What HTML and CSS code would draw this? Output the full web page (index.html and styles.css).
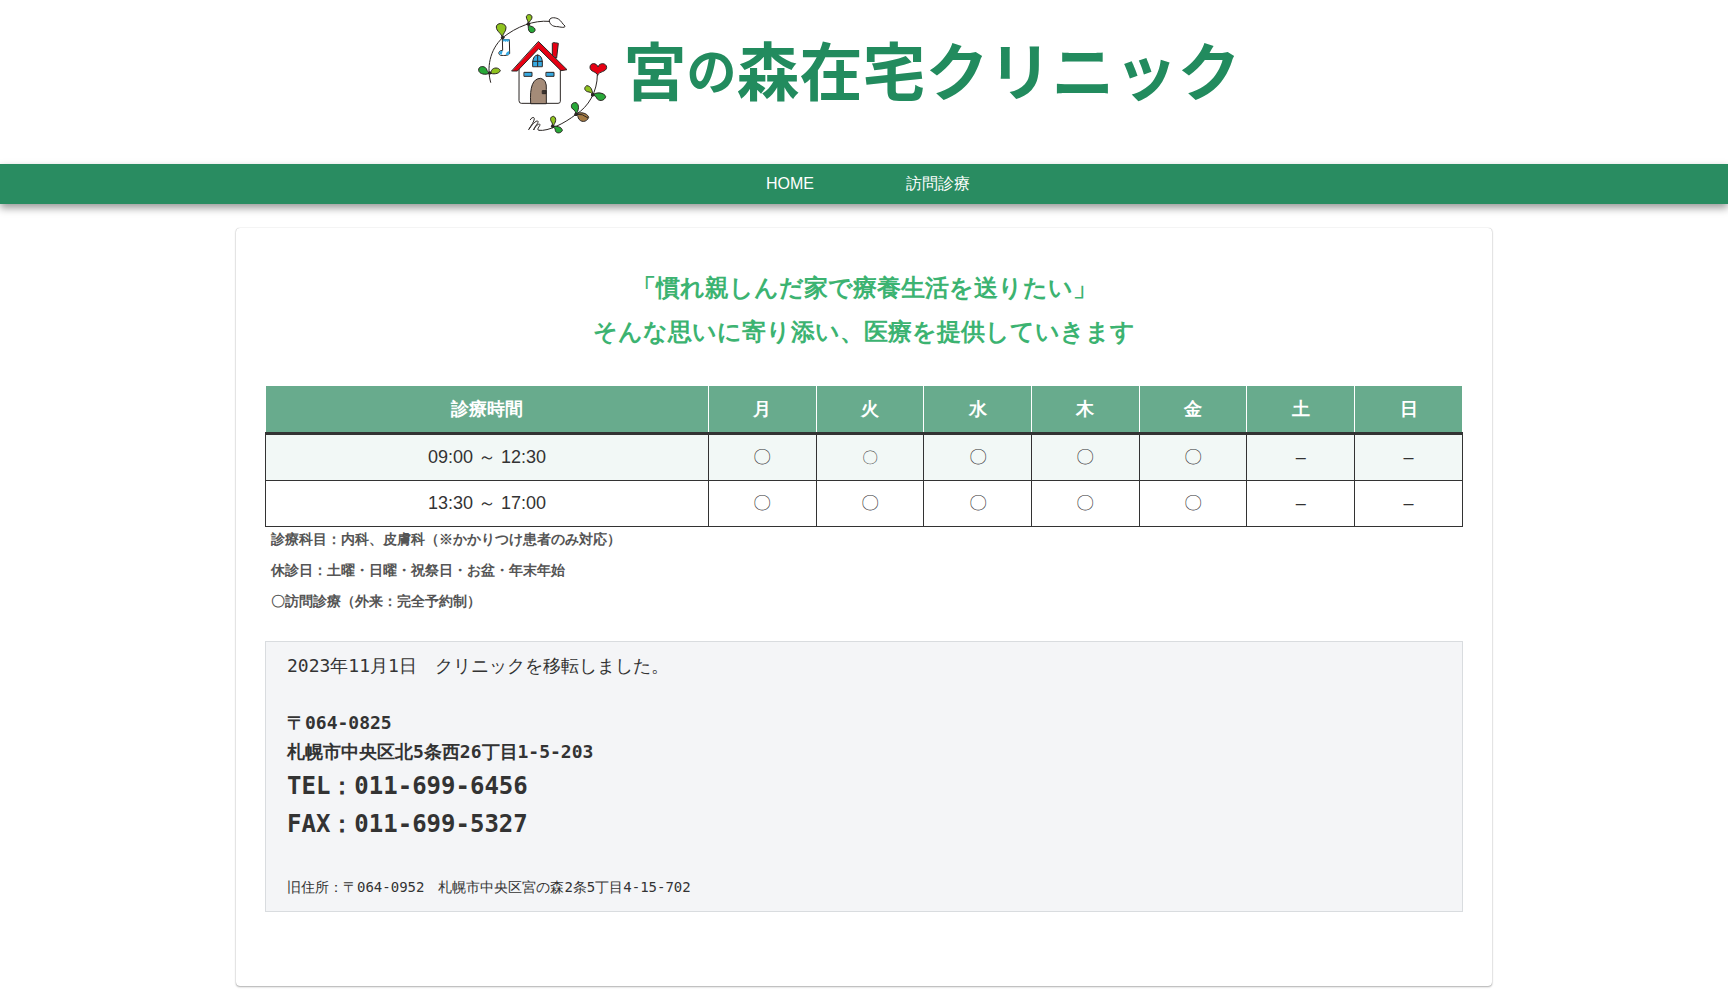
FILE: index.html
```html
<!DOCTYPE html>
<html lang="ja">
<head>
<meta charset="utf-8">
<meta name="viewport" content="width=device-width, initial-scale=1">
<title>宮の森在宅クリニック</title>
<link rel="stylesheet" href="styles.css">
</head>
<body>
<header class="site-header">
  <a class="logo" href="#">
    <svg class="logo-mark" viewBox="0 0 450 420" aria-hidden="true">
      <g fill="none" stroke="#2b2624" stroke-width="3" stroke-linecap="round" stroke-linejoin="round">
        <path d="M62 232C50 190 58 135 98 98C140 65 190 45 238 49"/>
        <path fill="#fff" d="M238 49C236 36 254 36 265 42C275 48 276 56 285 63C286 69 274 67 264 65C252 65 241 62 238 49Z"/>
        <path fill="#8fc31f" d="M97 98C96 85 79 80 79 66C79 52 106 52 108 67C109 80 98 84 97 98Z"/>
        <path fill="#8fc31f" d="M175 57C177 48 168 43 169 35C171 26 185 27 186 36C187 44 177 48 175 57Z"/>
        <path fill="#28a838" d="M175 57C174 70 175 84 187 83C199 80 197 69 187 65C180 63 177 62 175 57Z"/>
        <path fill="#28a838" d="M59 204C48 212 27 207 26 196C24 183 43 181 49 191C52 198 52 201 59 204Z"/>
        <path fill="#8fc31f" d="M59 204C69 209 87 207 91 197C87 186 69 187 65 196C64 200 62 202 59 204Z"/>
        <path fill="#fff" d="M99 104L118 104L119 145C117 152 103 152 92 151C83 148 85 136 98 136L97 98"/>
        <path stroke="none" fill="#36a9e1" d="M98 103h20v7l-3-2-3 3-3-3-3 3-3-3-4 2zM87 146C86 139 94 136 98 138L95 149ZM118 138L117 150L107 150C108 143 112 139 118 138Z"/>
        <path fill="#fff" d="M148 180L207 124L271 180V289Q271 295 264 295H154Q147 295 147 288Z"/>
        <path fill="#e60012" d="M247 151V115Q247 111 265 115L260 158Z"/>
        <path fill="#e60012" d="M206 110L291 194L273 197L206 131L142 198L126 198Z"/>
        <path fill="#36a9e1" d="M188 184V171Q190 151 203 150Q216 152 217 171V184ZM203 150V184M188 169H217"/>
        <path fill="#36a9e1" d="M163 202H186V214H163ZM229 202H252V214H229Z"/>
        <path fill="#a48b78" d="M182 295Q177 220 212 220Q231 224 229 253V295Z"/>
        <path fill="#3e3530" d="M218 257H228V266H218Z"/>
        <path d="M382 210C382 260 355 306 318 328C285 354 235 380 207 376"/>
        <path fill="#e60012" d="M383 210C380 199 359 201 360 186C361 172 380 173 384 186C388 172 409 173 410 187C410 201 386 199 383 210Z"/>
        <path fill="#28a838" d="M368 270C378 259 404 263 407 275C403 290 384 289 380 279C377 272 373 272 368 270Z"/>
        <path fill="#8fc31f" d="M368 270C368 257 363 242 350 242C339 249 345 260 357 261C363 262 366 265 368 270Z"/>
        <path fill="#a67c45" d="M318 328C328 319 352 323 356 337C350 354 330 352 325 339C324 333 321 330 318 328ZM318 328Q338 325 353 338"/>
        <path fill="#28a838" d="M318 328C327 317 329 298 318 293C305 291 300 304 308 312C316 316 317 322 318 328Z"/>
        <path fill="#8fc31f" d="M248 364C258 353 261 339 251 334C240 334 239 345 246 353Z"/>
        <path fill="#28a838" d="M248 364C257 362 277 365 277 377C270 388 255 384 256 375C256 369 250 368 248 364Z"/>
        <path d="M181 344C184 337 193 335 193 341C193 350 183 361 176 374C185 360 198 346 203 348C209 351 192 366 191 375C198 360 208 354 210 359C210 364 197 374 207 376"/>
        <g fill="#2b2624"><circle cx="98" cy="98" r="4"/><circle cx="175" cy="57" r="4"/><circle cx="59" cy="204" r="4"/><circle cx="368" cy="270" r="4"/><circle cx="318" cy="328" r="4"/><circle cx="248" cy="364" r="4"/></g>
      </g>
    </svg>
    <span class="logo-text"><span>宮</span><span class="logo-small">の</span><span>森在宅クリニック</span></span>
  </a>
</header>
<nav class="site-nav">
  <a href="#">HOME</a>
  <a href="#">訪問診療</a>
</nav>
<main class="card">
  <h1 class="lead">「慣れ親しんだ家で療養生活を送りたい」<br>そんな思いに寄り添い、医療を提供していきます</h1>
  <table class="hours">
    <thead>
      <tr><th class="time">診療時間</th><th>月</th><th>火</th><th>水</th><th>木</th><th>金</th><th>土</th><th>日</th></tr>
    </thead>
    <tbody>
      <tr><td>09:00 ～ 12:30</td><td>〇</td><td class="mark">〇</td><td>〇</td><td>〇</td><td>〇</td><td>–</td><td>–</td></tr>
      <tr><td>13:30 ～ 17:00</td><td>〇</td><td>〇</td><td>〇</td><td>〇</td><td>〇</td><td>–</td><td>–</td></tr>
    </tbody>
  </table>
  <div class="notes">
    <p>診療科目：内科、皮膚科（※かかりつけ患者のみ対応）</p>
    <p>休診日：土曜・日曜・祝祭日・お盆・年末年始</p>
    <p>〇訪問診療（外来：完全予約制）</p>
  </div>
  <section class="notice">
    <p>2023年11月1日　クリニックを移転しました。</p>
    <address class="address">〒064-0825<br>札幌市中央区北5条西26丁目1-5-203</address>
    <p class="phone">TEL：011-699-6456<br>FAX：011-699-5327</p>
    <p class="former">旧住所：〒064-0952　札幌市中央区宮の森2条5丁目4-15-702</p>
  </section>
</main>
</body>
</html>
```
FILE: styles.css
```css
* {
  box-sizing: border-box;
}

body {
  margin: 0;
  background: #fff;
  color: #333;
  font-family: "Liberation Sans", sans-serif;
  font-size: 18px;
}

p,
h1 {
  margin: 0;
}

.site-header {
  display: flex;
  justify-content: center;
  padding: 5px 0 19px;
}

.logo {
  display: flex;
  align-items: center;
  gap: 4px;
  padding-right: 18px;
  color: #228b5e;
  font-family: "Noto Sans CJK JP", sans-serif;
  text-decoration: none;
}

.logo-mark {
  width: 150px;
  height: 140px;
}

.logo-text {
  display: flex;
  align-items: center;
  padding-bottom: 14px;
  font-size: 63px;
  font-weight: 700;
  line-height: 72px;
  white-space: nowrap;
}

.logo-small {
  font-size: 50px;
}

.site-nav {
  display: grid;
  grid-template-columns: 148px 148px;
  justify-content: center;
  background: #298c61;
  box-shadow: 0 4px 8px rgba(0, 0, 0, 0.4);
}

.site-nav a {
  color: #fff;
  font-size: 16px;
  line-height: 40px;
  text-align: center;
  text-decoration: none;
}

.card {
  width: calc(100% - 40px);
  max-width: 1256px;
  margin: 24px auto 14px;
  padding: 38px 29px 74px;
  border-radius: 4px;
  box-shadow: 0 1px 2px rgba(0, 0, 0, 0.3), 0 0 1px rgba(0, 0, 0, 0.3);
}

.lead {
  margin-bottom: 31px;
  color: #3cb371;
  font-size: 24px;
  line-height: 44px;
  text-align: center;
}

.hours {
  width: 100%;
  border-collapse: collapse;
  table-layout: fixed;
  text-align: center;
  line-height: 29px;
}

.hours th {
  padding: 9px 8px 8px;
  border: 1px solid #fff;
  border-bottom: 3px solid #333;
  background: #68ab8d;
  color: #fff;
}

.hours .time {
  width: 37%;
}

.hours td {
  padding: 8px;
  border: 1px solid #333;
}

.hours .mark {
  font-size: 16px;
}

.hours tbody tr:first-child {
  background: #f2f8f6;
}

.notes {
  display: grid;
  gap: 6px;
  padding: 0 6px;
  margin-bottom: 27px;
  color: #555;
  font-size: 14px;
  font-weight: 700;
  line-height: 25px;
}

.notice {
  padding: 9px 21px;
  border: 1px solid #d9dcdf;
  background: #f4f5f7;
  font-family: "DejaVu Sans Mono", monospace;
  line-height: 29px;
}

.address {
  margin: 28px 0 1px;
  font-style: normal;
  font-weight: 700;
}

.phone {
  margin-bottom: 30px;
  font-size: 24px;
  font-weight: 700;
  line-height: 38px;
}

.former {
  font-size: 14px;
}
```
